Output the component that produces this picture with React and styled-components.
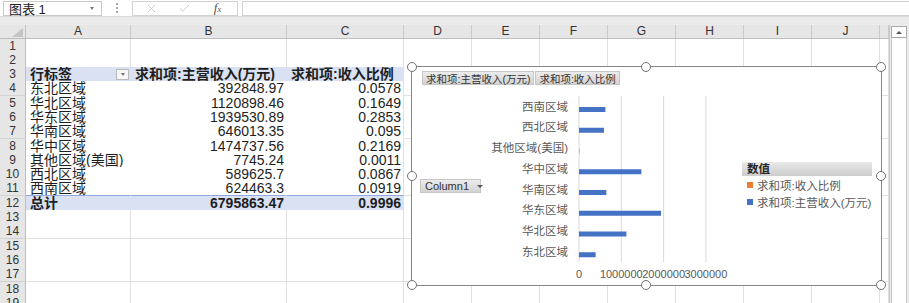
import React from 'react';
import styled, { createGlobalStyle } from 'styled-components';
import { X, Check } from 'lucide-react';

const COLS = [105, 156, 117, 68, 68, 68, 68, 68, 68, 68, 9];
const TEMPLATE = `26px ${COLS.map((w) => w + 'px').join(' ')}`;
const LETTERS = ['A', 'B', 'C', 'D', 'E', 'F', 'G', 'H', 'I', 'J', ''];
const ROW_H = 14.3;

const pivot = [
  ['东北区域', '392848.97', '0.0578', 392848.97],
  ['华北区域', '1120898.46', '0.1649', 1120898.46],
  ['华东区域', '1939530.89', '0.2853', 1939530.89],
  ['华南区域', '646013.35', '0.095', 646013.35],
  ['华中区域', '1474737.56', '0.2169', 1474737.56],
  ['其他区域(美国)', '7745.24', '0.0011', 7745.24],
  ['西北区域', '589625.7', '0.0867', 589625.7],
  ['西南区域', '624463.3', '0.0919', 624463.3],
];

const GlobalStyle = createGlobalStyle`
  html, body { margin: 0; padding: 0; background: #fff; overflow: hidden; }
  body { font-family: "Liberation Sans", "Noto Sans CJK SC", sans-serif; }
`;

const Page = styled.div`
  width: 909px;
  height: 303px;
  overflow: hidden;
`;

const Toolbar = styled.div`
  display: flex;
  align-items: center;
  height: 17px;
  box-sizing: border-box;
  padding: 1px 0 1px 3px;
  background: #fff;
  border-bottom: 1px solid #dadada;
`;

const NameBox = styled.div`
  width: 99px;
  height: 15px;
  box-sizing: border-box;
  border: 1px solid #c9c9c9;
  display: flex;
  align-items: center;
  justify-content: space-between;
  padding: 0 7px 0 5px;
  font-size: 13px;
  color: #222;
`;

const Caret = styled.span`
  width: 0;
  height: 0;
  border-left: ${(p) => p.$size || 2.5}px solid transparent;
  border-right: ${(p) => p.$size || 2.5}px solid transparent;
  border-top: ${(p) => (p.$size || 2.5) + 0.5}px solid ${(p) => p.$color || '#777'};
`;

const Dots = styled.div`
  width: 30px;
  display: flex;
  flex-direction: column;
  align-items: center;
  gap: 2px;

  span {
    width: 2px;
    height: 2px;
    background: #a6a6a6;
  }
`;

const IconBox = styled.div`
  width: 106px;
  height: 15px;
  box-sizing: border-box;
  border: 1px solid #d2d2d2;
  display: grid;
  grid-template-columns: repeat(3, 33px);
  padding-left: 2px;
  align-items: center;
  justify-items: center;
  color: #b4b4b4;
`;

const Fx = styled.span`
  font-family: "Liberation Serif", serif;
  font-style: italic;
  font-size: 13px;
  color: #555;
  line-height: 12px;

  sub {
    font-size: 9px;
    vertical-align: 0;
  }
`;

const FormulaInput = styled.div`
  flex: 1;
  margin-left: 4px;
  height: 15px;
  box-sizing: border-box;
  border: 1px solid #d2d2d2;
  border-right: none;
`;

const Workspace = styled.div`
  display: flex;
  height: 286px;
  box-sizing: border-box;
  padding-top: 8px;
  background: #ebebeb;
  overflow: hidden;
`;

const Grid = styled.div`
  position: relative;
  flex: none;
  width: 889px;
  background: #fff;
  overflow: hidden;
`;

const HeaderRow = styled.div`
  display: grid;
  grid-template-columns: ${TEMPLATE};
  height: 13.5px;
  box-sizing: border-box;
  background: #e6e6e6;
  border-bottom: 1px solid #bebebe;
`;

const Corner = styled.div`
  position: relative;
  border-right: 1px solid #c3c3c3;

  &::after {
    content: '';
    position: absolute;
    right: 2px;
    bottom: 1px;
    border-style: solid;
    border-width: 0 0 9px 11px;
    border-color: transparent transparent #c4c4c4 transparent;
  }
`;

const ColHead = styled.div`
  border-right: 1px solid #cacaca;
  font-size: 12px;
  line-height: 13px;
  color: #333;
  text-align: center;
`;

const Row = styled.div`
  display: grid;
  grid-template-columns: ${TEMPLATE};
  height: ${ROW_H}px;
`;

const RowHead = styled.div`
  box-sizing: border-box;
  background: #e6e6e6;
  border-right: 1px solid #bebebe;
  border-bottom: 1px solid #d3d3d3;
  font-size: 12px;
  line-height: 14px;
  color: #333;
  text-align: center;
`;

const Cell = styled.div`
  box-sizing: border-box;
  display: flex;
  align-items: center;
  justify-content: ${(p) => p.$justify || 'flex-start'};
  padding: 0 2px 0 4px;
  border-right: 1px solid ${(p) => (p.$pivot && !p.$edge ? 'transparent' : '#e0e0e0')};
  border-bottom: 1px solid
    ${(p) => (p.$line ? '#8ea9db' : p.$pivot ? 'transparent' : '#e0e0e0')};
  background: ${(p) => (p.$fill ? '#d9e1f2' : '#fff')};
  font-size: 14px;
  line-height: 14px;
  font-weight: ${(p) => (p.$bold ? 700 : 400)};
  color: #1e1e1e;
  white-space: nowrap;
`;

const FilterBtn = styled.span`
  width: 13px;
  height: 11px;
  box-sizing: border-box;
  margin-right: -1px;
  border: 1px solid #b9b9b9;
  background: #f7f7f7;
  display: flex;
  align-items: center;
  justify-content: center;
`;

const ScrollBar = styled.div`
  flex: none;
  width: 18px;
  display: flex;
  flex-direction: column;
  border-left: 1px solid #c8c8c8;
  box-sizing: border-box;
`;

const ScrollArrow = styled.div`
  height: 12px;
  margin: 1px 0 0 1px;
  box-sizing: border-box;
  border: 1px solid #a9a9a9;
  background: #fff;
  display: flex;
  align-items: center;
  justify-content: center;
`;

const UpCaret = styled.span`
  width: 0;
  height: 0;
  border-left: 3px solid transparent;
  border-right: 3px solid transparent;
  border-bottom: 3px solid #555;
`;

const Track = styled.div`
  flex: 1;
  margin-left: 1px;
  background: #fff;
  border-left: 1px solid #c8c8c8;
  border-right: 1px solid #c8c8c8;
`;

/* chart overlay */
const Chart = styled.div`
  position: absolute;
  left: 411px;
  top: 41px;
  width: 471px;
  height: 220px;
  box-sizing: border-box;
  border: 1px solid #868686;
  background: #fff;
`;

const Handle = styled.span`
  position: absolute;
  width: 10px;
  height: 10px;
  box-sizing: border-box;
  border-radius: 50%;
  border: 1.6px solid #727272;
  background: #fff;
  left: calc(${(p) => p.$x}% - 5.5px);
  top: calc(${(p) => p.$y}% - 5.5px);
`;

const FieldButtons = styled.div`
  position: absolute;
  left: 10px;
  top: 4px;
  display: flex;
  gap: 1px;
`;

const GrayButton = styled.div`
  height: 14px;
  box-sizing: border-box;
  padding: 0 3px;
  display: flex;
  align-items: center;
  gap: 8px;
  border: 1px solid #c6c6c6;
  background: linear-gradient(#ececec, #d3d3d3);
  font-size: ${(p) => p.$size || 10.5}px;
  color: #333;
  white-space: nowrap;
`;

const AxisButton = styled(GrayButton)`
  position: absolute;
  left: 8px;
  top: 112px;
  width: 61px;
  padding: 0 4px;
`;

const Plot = styled.svg`
  position: absolute;
  left: 0;
  top: 0;
  font-family: "Liberation Sans", "Noto Sans CJK SC", sans-serif;
`;

const Legend = styled.div`
  position: absolute;
  left: 330px;
  top: 95px;
  width: 130px;
`;

const LegendTitle = styled.div`
  height: 14px;
  padding-left: 5px;
  background: linear-gradient(#e9e9e9, #cdcdcd);
  font-size: 11.5px;
  line-height: 14px;
  font-weight: 700;
  color: #262626;
`;

const LegendItem = styled.div`
  height: 17px;
  display: flex;
  align-items: center;
  gap: 4px;
  padding-left: 5px;
  font-size: 11.5px;
  color: #595959;
  white-space: nowrap;

  &:first-of-type {
    margin-top: 1px;
  }
`;

const Swatch = styled.span`
  width: 6px;
  height: 6px;
  background: ${(p) => p.$color};
`;

const AXIS_X = 167;
const SCALE = 42.3 / 1e6;
const PLOT_TOP = 29;
const PLOT_BOTTOM = 195;
const BAND = 20.75;

function BarPlot() {
  const cats = [...pivot].reverse();
  const ticks = [0, 1e6, 2e6, 3e6];
  return (
    <Plot width="469" height="218">
      {ticks.map((t) => (
        <line
          key={'g' + t}
          x1={AXIS_X + t * SCALE}
          x2={AXIS_X + t * SCALE}
          y1={PLOT_TOP}
          y2={PLOT_BOTTOM}
          stroke="#d9d9d9"
          strokeWidth="1"
        />
      ))}
      {cats.map(([name, , , v], i) => {
        const top = PLOT_TOP + i * BAND;
        return (
          <g key={name}>
            <text x="156" y={top + 14.5} textAnchor="end" fontSize="11.5" fill="#595959">
              {name}
            </text>
            <rect x={AXIS_X} y={top + 11} width={Math.max(v * SCALE, 0.3)} height="5" fill="#4472c4" />
          </g>
        );
      })}
      {ticks.map((t) => (
        <text key={'t' + t} x={AXIS_X + t * SCALE} y="211" textAnchor="middle" fontSize="11" fill="#595959">
          {t}
        </text>
      ))}
    </Plot>
  );
}

function PivotChart() {
  const handles = [
    [0, 0], [50, 0], [100, 0],
    [0, 50], [100, 50],
    [0, 100], [50, 100], [100, 100],
  ];
  return (
    <Chart>
      <FieldButtons>
        <GrayButton>求和项:主营收入(万元)</GrayButton>
        <GrayButton>求和项:收入比例</GrayButton>
      </FieldButtons>
      <BarPlot />
      <AxisButton $size={11}>
        Column1 <Caret $color="#555" $size={3} />
      </AxisButton>
      <Legend>
        <LegendTitle>数值</LegendTitle>
        <LegendItem>
          <Swatch $color="#ed7d31" />
          求和项:收入比例
        </LegendItem>
        <LegendItem>
          <Swatch $color="#4472c4" />
          求和项:主营收入(万元)
        </LegendItem>
      </Legend>
      {handles.map(([x, y]) => (
        <Handle key={x + '-' + y} $x={x} $y={y} />
      ))}
    </Chart>
  );
}

function rowCells(n) {
  const blanks = (from) =>
    COLS.slice(from).map((_, i) => <Cell key={'b' + (from + i)} />);

  if (n === 3) {
    return [
      <Cell key="a" $pivot $fill $line $bold $justify="space-between">
        行标签
        <FilterBtn>
          <Caret $size={2.5} $color="#777" />
        </FilterBtn>
      </Cell>,
      <Cell key="b" $pivot $fill $line $bold>求和项:主营收入(万元)</Cell>,
      <Cell key="c" $pivot $edge $fill $line $bold>求和项:收入比例</Cell>,
      ...blanks(3),
    ];
  }
  if (n >= 4 && n <= 11) {
    const [name, rev, ratio] = pivot[n - 4];
    const last = n === 11;
    return [
      <Cell key="a" $pivot $line={last}>{name}</Cell>,
      <Cell key="b" $pivot $line={last} $justify="flex-end">{rev}</Cell>,
      <Cell key="c" $pivot $edge $line={last} $justify="flex-end">{ratio}</Cell>,
      ...blanks(3),
    ];
  }
  if (n === 12) {
    return [
      <Cell key="a" $pivot $fill $bold>总计</Cell>,
      <Cell key="b" $pivot $fill $bold $justify="flex-end">6795863.47</Cell>,
      <Cell key="c" $pivot $edge $fill $bold $justify="flex-end">0.9996</Cell>,
      ...blanks(3),
    ];
  }
  return blanks(0);
}

export default function App() {
  const rows = Array.from({ length: 19 }, (_, i) => i + 1);
  return (
    <Page>
      <GlobalStyle />
      <Toolbar>
        <NameBox>
          图表 1
          <Caret />
        </NameBox>
        <Dots>
          <span />
          <span />
          <span />
        </Dots>
        <IconBox>
          <X size={13} strokeWidth={1.3} />
          <Check size={13} strokeWidth={1.3} />
          <Fx>
            f<sub>x</sub>
          </Fx>
        </IconBox>
        <FormulaInput />
      </Toolbar>
      <Workspace>
        <Grid>
          <HeaderRow>
            <Corner />
            {LETTERS.map((l, i) => (
              <ColHead key={i}>{l}</ColHead>
            ))}
          </HeaderRow>
          {rows.map((n) => (
            <Row key={n}>
              <RowHead>{n}</RowHead>
              {rowCells(n)}
            </Row>
          ))}
          <PivotChart />
        </Grid>
        <ScrollBar>
          <ScrollArrow>
            <UpCaret />
          </ScrollArrow>
          <Track />
        </ScrollBar>
      </Workspace>
    </Page>
  );
}
